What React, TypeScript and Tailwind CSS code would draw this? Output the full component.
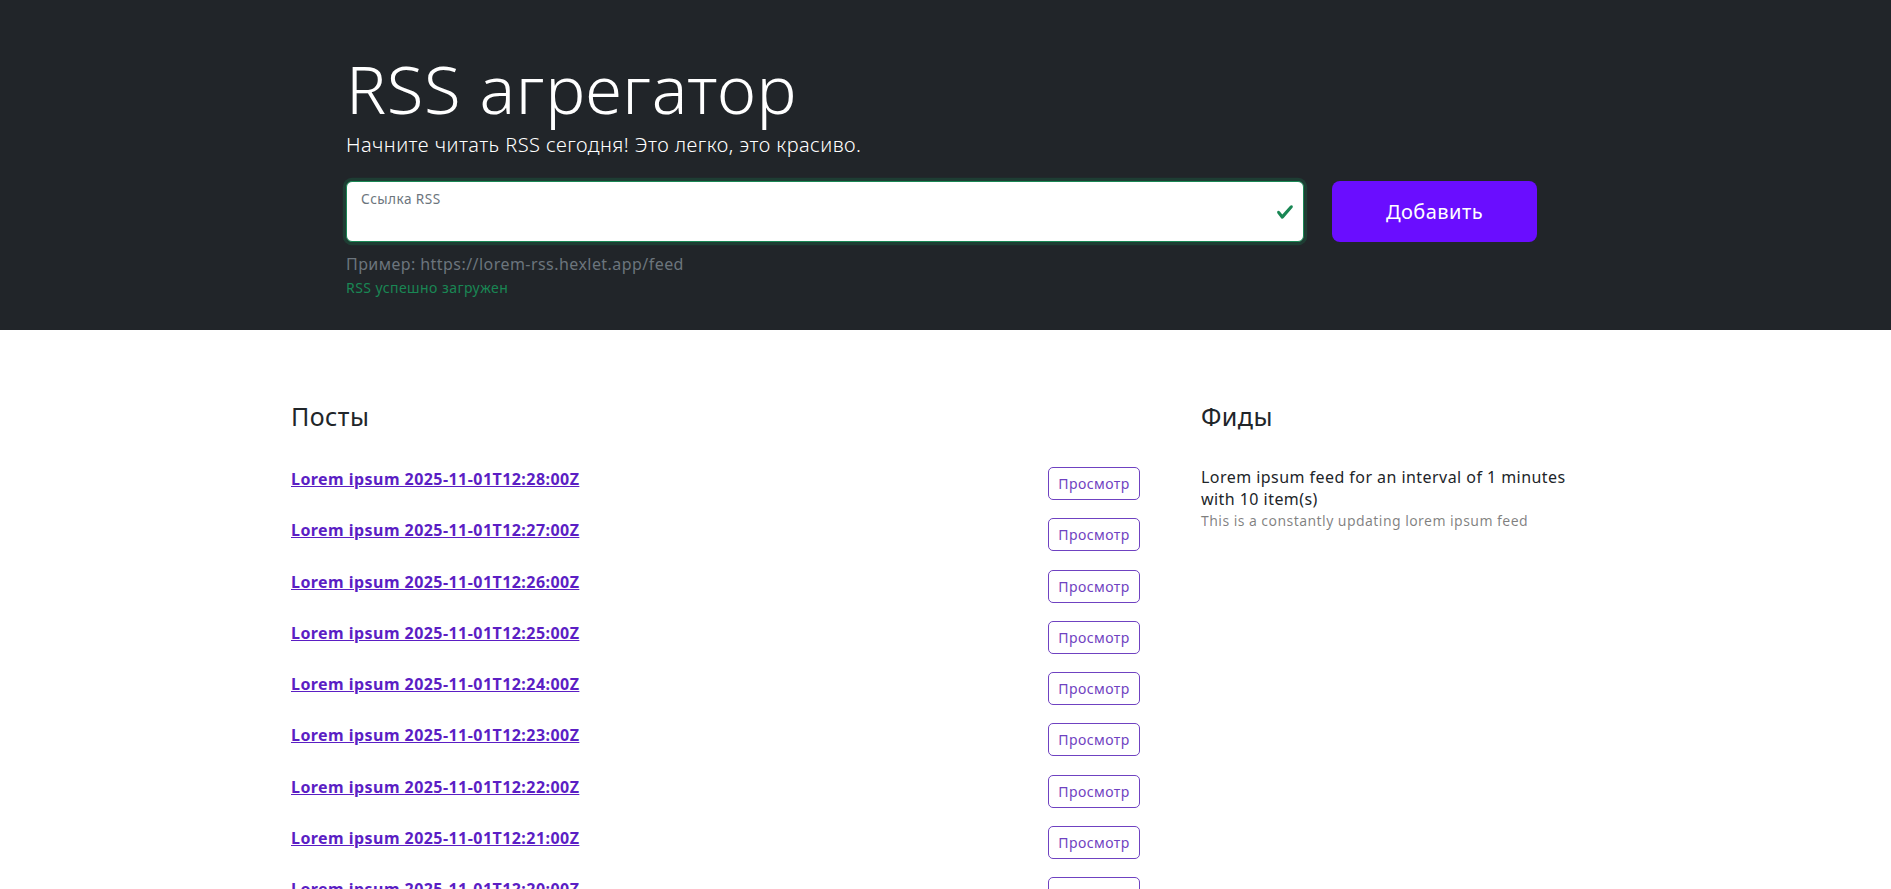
const posts = [28, 27, 26, 25, 24, 23, 22, 21, 20, 19].map(
  (m) => `Lorem ipsum 2025-11-01T12:${m}:00Z`,
)

function CheckIcon() {
  return (
    <svg viewBox="0 0 8 8" className="h-[18px] w-[18px]">
      <path
        fill="#198754"
        d="M2.3 6.73.6 4.53c-.4-1.04.46-1.4 1.1-.8l1.1 1.4 3.4-3.8c.6-.63 1.6-.27 1.2.7l-4 4.6c-.43.5-.8.4-1.1.1z"
      />
    </svg>
  )
}

function Header() {
  return (
    <section className="h-[330px] bg-[#212529] pt-12">
      <div className="mx-auto w-[1199px]">
        <h1 className="text-[67px] font-light leading-[1.2] tracking-[0.01em] text-white">RSS агрегатор</h1>
        <p className="mt-[2px] text-[20px] font-light leading-[1.5] text-white">
          Начните читать RSS сегодня! Это легко, это красиво.
        </p>
        <form className="mt-[21px] flex items-stretch">
          <div className="relative h-[61px] w-[958px] rounded-md border border-[#198754] bg-white shadow-[0_0_0_0.2rem_rgba(25,135,84,0.25)]">
            <label className="absolute left-[14px] top-[7px] text-[13.6px] leading-[1.5] text-[#6c757d]">
              Ссылка RSS
            </label>
            <span className="absolute right-[9px] top-1/2 -translate-y-1/2">
              <CheckIcon />
            </span>
          </div>
          <button
            type="button"
            className="ml-[28px] w-[205px] rounded-lg bg-[#6a0dff] text-[20px] text-white"
          >
            Добавить
          </button>
        </form>
        <p className="mt-[10px] text-[16px] leading-[1.5] text-[#6c757d]">
          Пример: https://lorem-rss.hexlet.app/feed
        </p>
        <p className="mt-[1px] text-[14px] leading-[1.5] text-[#198754]">RSS успешно загружен</p>
      </div>
    </section>
  )
}

function Posts() {
  return (
    <div className="w-[849px]">
      <h2 className="text-[25px] leading-[1.2] text-[#212529]">Посты</h2>
      <ul className="mt-[36px]">
        {posts.map((title) => (
          <li key={title} className="flex h-[51.3px] items-start justify-between">
            <a href="#" className="text-[16px] font-bold leading-[1.5] text-[#5b1ec4] underline">
              {title}
            </a>
            <button
              type="button"
              className="h-[33px] w-[92px] rounded-[5px] border border-[#6f42c1] text-[14px] text-[#6f42c1]"
            >
              Просмотр
            </button>
          </li>
        ))}
      </ul>
    </div>
  )
}

function Feeds() {
  return (
    <div className="ml-[61px] w-[399px]">
      <h2 className="text-[25px] leading-[1.2] text-[#212529]">Фиды</h2>
      <div className="mt-[36px] w-[380px]">
        <h3 className="text-[16px] leading-[21.6px] text-[#212529]">
          Lorem ipsum feed for an interval of 1 minutes with 10 item(s)
        </h3>
        <p className="text-[14px] leading-[1.5] text-black/50">
          This is a constantly updating lorem ipsum feed
        </p>
      </div>
    </div>
  )
}

export default function App() {
  return (
    <div className="min-h-screen bg-white font-['Noto_Sans',sans-serif] tracking-[0.028em]">
      <Header />
      <main className="mx-auto flex w-[1309px] pt-[71px]">
        <Posts />
        <Feeds />
      </main>
    </div>
  )
}
